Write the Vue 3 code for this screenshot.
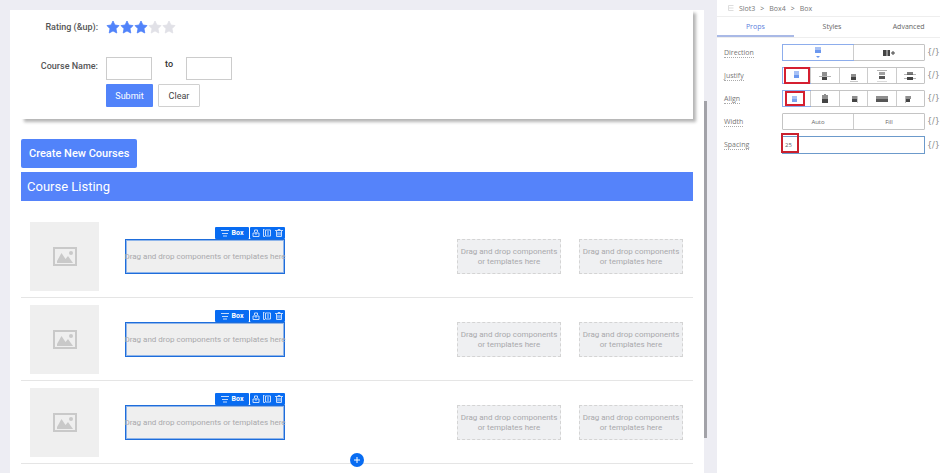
<script setup>
import { ref } from 'vue'

const rating = ref(3)
const from = ref('')
const to = ref('')
const spacing = ref('25')
const rows = [1, 2, 3]
const crumbs = ['Slot3', 'Box4', 'Box']
const tabs = ['Props', 'Styles', 'Advanced']
const starPath = 'M7 1l1.900 4 4.100.6-3 3.100.8 4.300L7 10.900l-3.800 2.100.8-4.300L1 5.600l4.100-.6z'

// Each glyph is a list of [x, y, width, height, opacity] blocks on a 14 x 12 grid.
const justify = [
  { name: 'Start', blocks: [[4, 1, 5, 4, 0.6], [4, 5, 5, 3, 1]] },
  { name: 'Center', blocks: [[4, 2, 5, 4, 0.6], [1, 6, 12, 1, 0.4], [4, 7, 5, 3, 1]] },
  { name: 'End', blocks: [[4, 4, 5, 3, 0.6], [4, 7, 5, 3, 1], [3, 11, 8, 1, 0.3]] },
  { name: 'Space between', blocks: [[2, 0, 10, 1, 0.4], [4, 2, 6, 3, 0.5], [4, 6, 6, 3, 0.9], [2, 11, 10, 1, 0.2]] },
  { name: 'Space around', blocks: [[1, 4, 12, 1, 0.4], [4, 2, 6, 3, 0.7], [4, 7, 6, 3, 1], [1, 8, 12, 1, 0.4]] }
]
const align = [
  { name: 'Left', blocks: [[2, 3, 5, 3, 0.6], [2, 6, 5, 3, 0.9]] },
  { name: 'Middle', blocks: [[4, 2, 6, 4, 0.6], [6, 1, 2, 1, 0.6], [4, 6, 6, 4, 1]] },
  { name: 'Right', blocks: [[5, 3, 5, 3, 0.6], [5, 6, 5, 3, 1], [10, 3, 1, 7, 0.3]] },
  { name: 'Stretch', blocks: [[1, 3, 12, 3, 0.6], [1, 6, 12, 3, 0.9]] },
  { name: 'Baseline', blocks: [[2, 3, 1, 7, 0.4], [3, 3, 5, 3, 0.6], [3, 6, 4, 3, 1]] }
]
</script>

<template>
  <div class="app">
    <main class="stage">
      <div class="canvas">
        <form class="filters" @submit.prevent>
          <span class="label">Rating (&amp;up):</span>
          <div class="stars">
            <button v-for="n in 5" :key="n" type="button" class="star" :class="{ on: n <= rating }" :aria-label="n + ' stars'" @click="rating = n">
              <svg viewBox="0 0 14 14"><path :d="starPath" stroke-width=".8" stroke-linejoin="round" /></svg>
            </button>
          </div>
          <label class="label name" for="from">Course Name:</label>
          <div class="range">
            <input id="from" v-model="from" type="text">
            <label for="to">to</label>
            <input id="to" v-model="to" type="text">
          </div>
          <div class="actions">
            <button type="submit" class="submit">Submit</button>
            <button type="reset" class="clear">Clear</button>
          </div>
        </form>

        <button type="button" class="create">Create New Courses</button>
        <h1>Course Listing</h1>

        <div v-for="row in rows" :key="row" class="course">
          <div class="thumb">
            <svg viewBox="0 0 24 20"><rect x="1" y="1" width="22" height="17" fill="none" stroke="#c9c9c9" stroke-width="2" /><path d="M4 16v-2l4.500-8 4 6 2.500-3 5 7z" fill="#c9c9c9" /><circle cx="18" cy="6" r="2" fill="#c9c9c9" /></svg>
          </div>
          <div class="selected">
            <div class="tools">
              <button type="button" class="kind">
                <svg viewBox="0 0 8 8"><path d="M0 1.500h8M1 4.500h6M2 7h4" /></svg>Box
              </button>
              <div class="tool-group">
                <button type="button" aria-label="Select parent"><svg viewBox="0 0 8 8"><path d="M2.500 3V1h3v2M1 4h6v3.500H1zM4 3v3" /></svg></button>
                <button type="button" aria-label="Duplicate"><svg viewBox="0 0 8 8"><path d="M2.500 1H7.500v6h-5zM0 .5h1.500M.5 1v6.500H2M4 3h2M4 5h2" /></svg></button>
                <button type="button" aria-label="Delete"><svg viewBox="0 0 8 8"><path d="M0 1.500h8M3 1V.5h2V1M1.500 2v5.500h5V2M3 3v3.500M5 3v3.500" /></svg></button>
              </div>
            </div>
            Drag and drop components or templates here
          </div>
          <div class="slot first">Drag and drop components or templates here</div>
          <div class="slot">Drag and drop components or templates here</div>
        </div>
        <button type="button" class="add" aria-label="Add"><svg viewBox="0 0 14 14"><path d="M7 4v6M4 7h6" /></svg></button>
      </div>
      <div class="scroll"></div>
    </main>

    <aside>
      <nav class="crumbs">
        <svg viewBox="0 0 6 6"><path d="M.5 .5h5M.5 3h5M.5 5.500h5M.5 .5v5" /></svg>
        <template v-for="(crumb, i) in crumbs" :key="crumb">
          <span v-if="i" class="sep">&gt;</span><a href="#">{{ crumb }}</a>
        </template>
      </nav>
      <div class="tabs">
        <button v-for="(tab, i) in tabs" :key="tab" type="button" :class="{ active: i === 0 }">{{ tab }}</button>
      </div>
      <div class="props">
        <span class="prop">Direction</span>
        <div class="segments">
          <button type="button" class="on" aria-label="Vertical">
            <svg viewBox="0 0 14 12"><path d="M4 0h6v3H4z" opacity=".6" /><path d="M4 3h6v3H4zM5 9h4l-2 2z" /></svg>
          </button>
          <button type="button" aria-label="Horizontal">
            <svg viewBox="0 0 14 12"><path d="M1 3h3v6H1z" /><path d="M4 3h2v6H4z" opacity=".6" /><path d="M6 3h2v6H6zM9 5.500h4v1H9zM10.500 4h1v4h-1z" /></svg>
          </button>
        </div>
        <span class="code">{/}</span>

        <span class="prop">Justify</span>
        <div class="segments">
          <button v-for="(item, i) in justify" :key="item.name" type="button" :class="{ on: i === 0, marked: i === 0 }" :aria-label="item.name">
            <svg viewBox="0 0 14 12"><rect v-for="(b, k) in item.blocks" :key="k" :x="b[0]" :y="b[1]" :width="b[2]" :height="b[3]" :opacity="b[4]" /></svg>
          </button>
        </div>
        <span class="code">{/}</span>

        <span class="prop">Align</span>
        <div class="segments">
          <button v-for="(item, i) in align" :key="item.name" type="button" :class="{ on: i === 0, 'marked small': i === 0 }" :aria-label="item.name">
            <svg viewBox="0 0 14 12"><rect v-for="(b, k) in item.blocks" :key="k" :x="b[0]" :y="b[1]" :width="b[2]" :height="b[3]" :opacity="b[4]" /></svg>
          </button>
        </div>
        <span class="code">{/}</span>

        <span class="prop">Width</span>
        <div class="segments">
          <button type="button">Auto</button>
          <button type="button">Fill</button>
        </div>
        <span class="code">{/}</span>

        <label class="prop" for="spacing">Spacing</label>
        <div class="field"><input id="spacing" v-model="spacing" type="text"></div>
        <span class="code">{/}</span>
      </div>
    </aside>
  </div>
</template>

<style>
body { margin: 0; background: #ededf3; }
</style>

<style scoped>
*, *::after { box-sizing: border-box; }
button, input { margin: 0; padding: 0; border: 0; background: none; font: inherit; color: inherit; }
svg { display: block; }
.app { display: flex; min-height: 100vh; font-family: Roboto, sans-serif; color: #444; }
.stage { flex: 1; min-width: 0; display: flex; padding: 10px 10px 0; }
.canvas { position: relative; flex: 1; min-width: 0; padding: 0 11px 8px; background: #fff; }
.scroll { width: 3px; margin: 91px 0 35px; background: #a2a2a8; }

.filters {
  display: grid; grid-template-columns: 77px 1fr; column-gap: 8px; row-gap: 4px; align-items: start;
  padding: 10px 0 12px; box-shadow: 3px 3px 3px #b5b5b5; font-size: 9px; line-height: 14px;
}
.label { text-align: right; font-weight: 500; color: #555; }
.stars { display: flex; height: 33px; }
.star { width: 14px; height: 14px; fill: #e1e1e7; stroke: #e1e1e7; }
.star.on { fill: #5183fa; stroke: #5183fa; }
.range { display: flex; gap: 13px; }
.range label { width: 8px; font-weight: 500; color: #333; }
.range input { width: 46px; height: 23px; border: 1px solid #ccc; }
.name { padding-top: 2px; }
.actions { grid-column: 2; display: flex; gap: 5px; }
.actions button { height: 23px; border-radius: 1px; }
.submit { width: 47px; background: #5183fa; color: #fff; }
.clear { width: 42px; border: 1px solid #d0d0d0; }

.create { display: block; height: 29px; margin-top: 20px; padding: 0 8px; border-radius: 2px; background: #5183fa; color: #fff; font-size: 11px; font-weight: 500; }
h1 { height: 29px; margin: 4px 0 14px; padding-left: 6px; background: #5583fa; color: #fff; font-size: 13px; font-weight: 400; line-height: 29px; }

.course { display: flex; align-items: center; padding: 7px 10px 6px 9px; border-bottom: 1px solid #e5e5e5; color: #a9a9ac; font-size: 8px; line-height: 10px; }
.thumb { display: grid; place-items: center; width: 69px; height: 69px; background: #efefef; }
.thumb svg { width: 24px; height: 20px; }
.selected { position: relative; display: flex; align-items: center; justify-content: center; width: 160px; height: 35px; margin-left: 26px; border: 1px solid #1e6ddb; box-shadow: inset 0 0 0 1px #8fb5ea; background: #efefef; white-space: nowrap; }
.tools { position: absolute; right: -1px; bottom: 34px; display: flex; gap: 1px; height: 12px; color: #fff; font-size: 7px; font-weight: 700; }
.tools svg { width: 8px; height: 8px; fill: none; stroke: #c5dbfc; }
.kind { display: flex; align-items: center; justify-content: center; gap: 3px; width: 34px; border-radius: 1px; background: #086cf2; }
.tool-group { display: flex; align-items: center; justify-content: space-around; width: 35px; border-radius: 1px; background: #086cf2; }
.slot { display: flex; align-items: center; justify-content: center; width: 104px; height: 35px; margin-left: 18px; border: 1px dashed #d4d4d4; background: #eff0f2; text-align: center; }
.slot.first { margin-left: auto; }
.add { position: absolute; bottom: 6px; left: 50%; width: 14px; height: 14px; transform: translateX(-50%); border-radius: 50%; background: #086cf2; }
.add svg { width: 14px; height: 14px; stroke: #fff; }

aside { width: 223px; overflow: hidden; background: #fff; font-family: "Open Sans", sans-serif; font-size: 7px; color: #666; }
.crumbs { display: flex; align-items: center; gap: 5px; height: 17px; padding-left: 11px; border-bottom: 1px solid #eee; }
.crumbs svg { width: 6px; height: 6px; fill: none; stroke: #ddd; }
.crumbs a { color: #777; text-decoration: none; }
.tabs { display: grid; grid-template-columns: repeat(3, 1fr); height: 21px; margin-right: -7px; border-bottom: 1px solid #eee; }
.tabs button { border-bottom: 2px solid transparent; }
.tabs .active { border-color: #a9b9e6; color: #6080dd; }
.props { display: grid; grid-template-columns: 56px 1fr 11px; column-gap: 2px; row-gap: 6px; align-items: center; padding: 6px 2px 0 7px; }
.prop { justify-self: start; border-bottom: 1px dotted #aaa; font-size: 7px; line-height: 9px; color: #777; }
.segments { display: flex; height: 17px; border: 1px solid #c4c4c4; border-radius: 1px; fill: #444; }
.segments button { position: relative; display: flex; flex: 1; align-items: center; justify-content: center; font-size: 6px; }
.segments button + button { border-left: 1px solid #ccc; }
.segments .on { outline: 1px solid #8dadec; fill: #6c98ef; }
.segments svg { width: 14px; height: 12px; }
.marked::after { content: ""; position: absolute; inset: -1px 0 -1px 1px; border: 2px solid #d51f30; }
.marked.small::after { inset: 0 5px 0 2px; }
.field { position: relative; }
.field input { display: block; width: 100%; height: 18px; padding-left: 2px; border: 1px solid #6c9acb; font-size: 6px; }
.field::after { content: ""; position: absolute; top: -3px; left: -1px; width: 18px; height: 20px; border: 2px solid #c9202d; pointer-events: none; }
.code { font-family: "DejaVu Sans", sans-serif; font-size: 8px; line-height: 9px; color: #888; }
</style>
